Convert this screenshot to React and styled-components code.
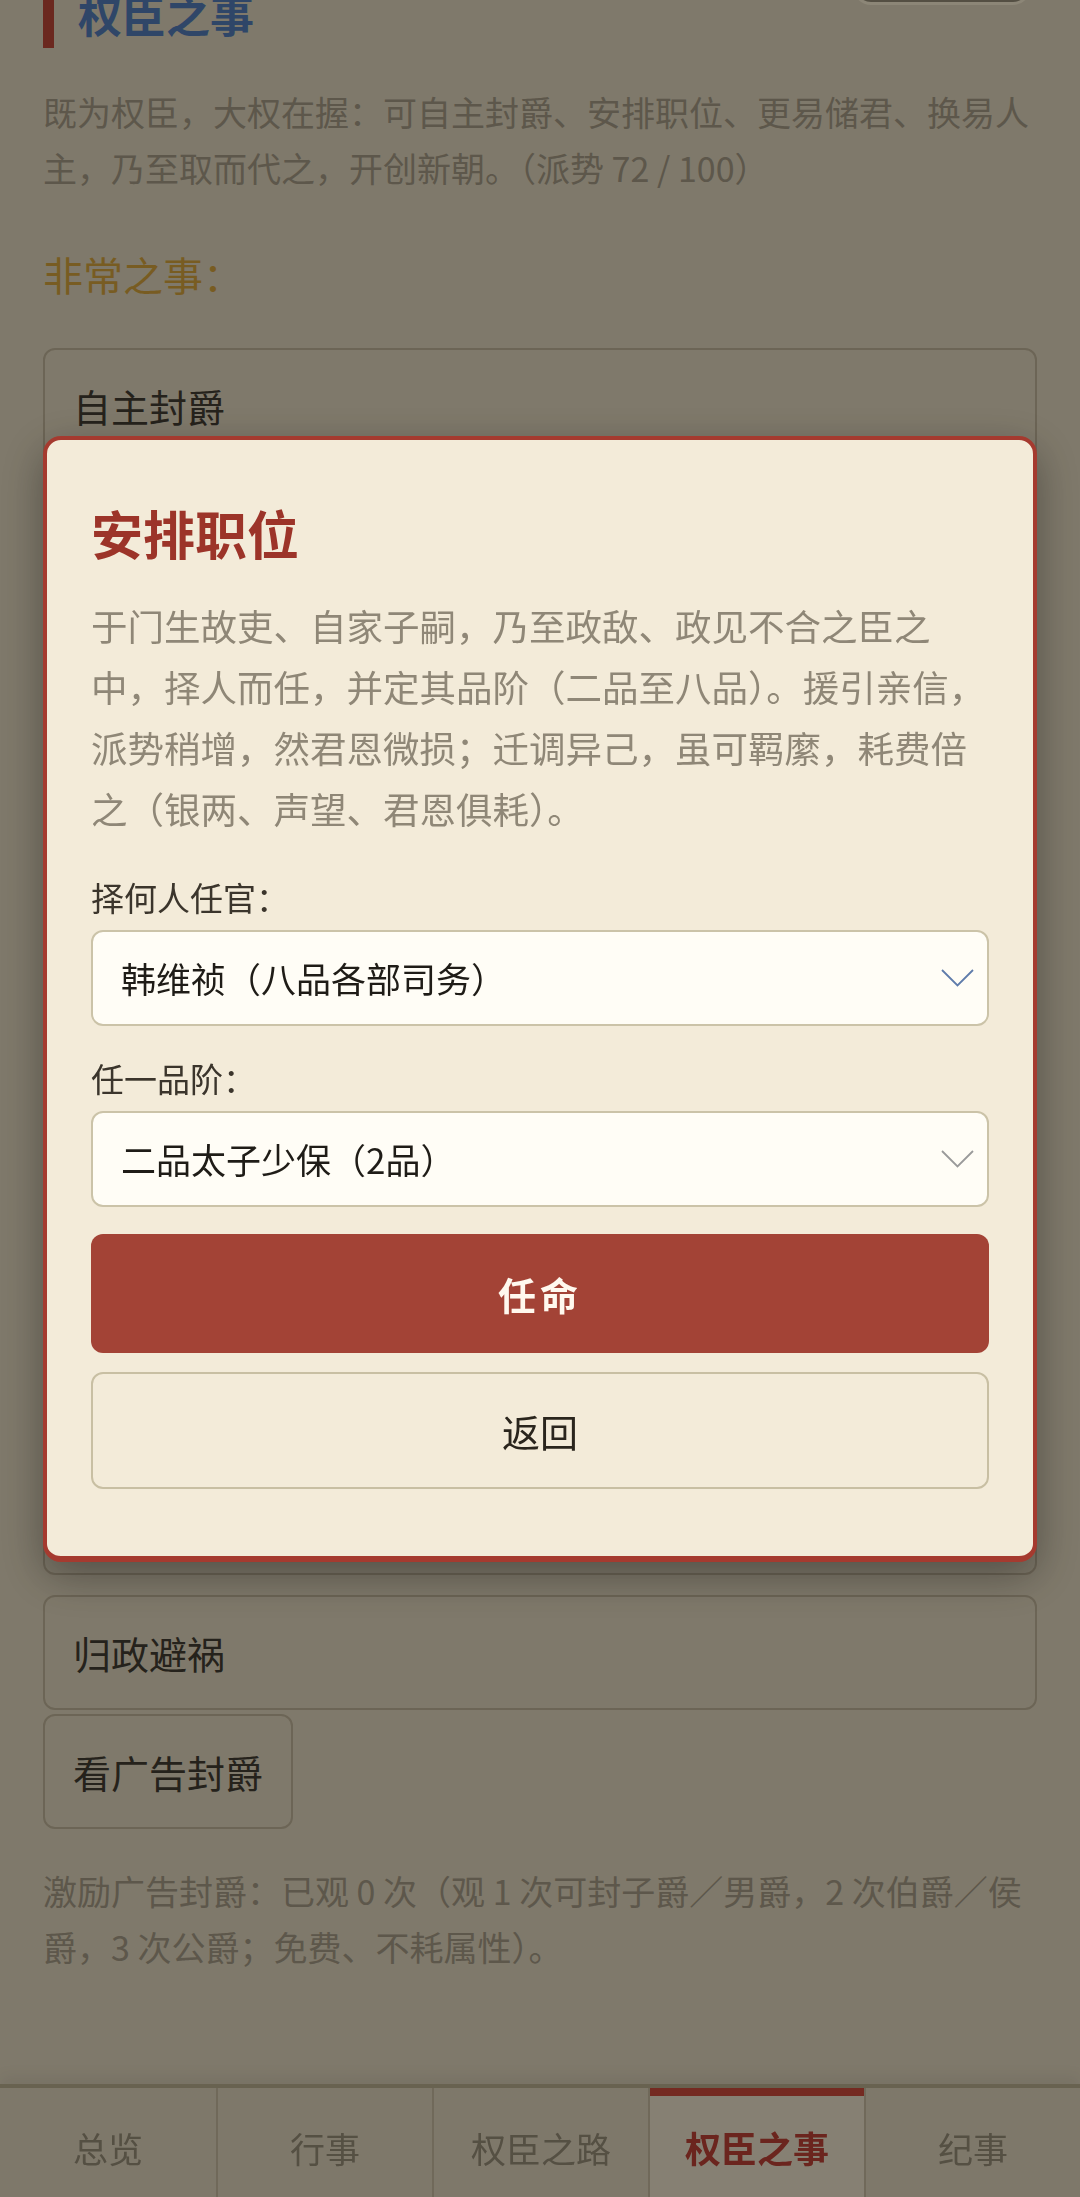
import React from "react";
import styled, { createGlobalStyle } from "styled-components";

const GlobalStyle = createGlobalStyle`
  * { box-sizing: border-box; }
  html, body { margin: 0; padding: 0; }
  body {
    background: #d4cab2;
    font-family: "Noto Sans CJK SC", "Noto Sans", sans-serif;
    color: #3f392f;
    overflow: hidden;
  }
  #root { display: flow-root; }
`;

const Page = styled.main`
  padding: 0 43px 240px;
`;

const HeaderRow = styled.header`
  display: flex;
  justify-content: space-between;
  align-items: flex-start;
  margin-top: -55px;
`;

const PageTitle = styled.h2`
  margin: 35px 0 0;
  padding: 3px 0 3px 24px;
  border-left: 11px solid #b24335;
  font-size: 44px;
  line-height: 62px;
  font-weight: 700;
  color: #4f76ad;
`;

const TopButton = styled.button`
  width: 178px;
  height: 60px;
  margin-right: 6px;
  border: 3px solid #e9dfc6;
  border-radius: 18px;
  background: #8c8470;
  font: inherit;
`;

const Intro = styled.p`
  margin: 36px 0 0;
  font-size: 34px;
  line-height: 56px;
  color: #9b917d;
`;

const SectionTitle = styled.h3`
  margin: 49px 0 0;
  font-size: 40px;
  line-height: 58px;
  font-weight: 400;
  color: #c99a3a;
`;

const ActionList = styled.div`
  display: flex;
  flex-direction: column;
  gap: 20px;
  margin-top: 45px;
`;

const ActionCard = styled.button`
  display: block;
  width: ${p => (p.$compact ? "auto" : "100%")};
  margin-top: ${p => (p.$compact ? "4px" : "0")};
  padding: 27px 28px;
  border: 2px solid #b4a88f;
  border-radius: 12px;
  background: transparent;
  text-align: left;
  font-family: inherit;
  font-size: 38px;
  line-height: 57px;
  color: #3f392f;
`;

const CardNote = styled.span`
  display: block;
  font-size: 24px;
  line-height: 32px;
  color: #9b917d;
`;

const Note = styled.p`
  margin: 34px 0 0;
  font-size: 34px;
  line-height: 56px;
  color: #9b917d;
`;

const TabBar = styled.nav`
  position: fixed;
  left: 0;
  right: 0;
  bottom: 0;
  display: grid;
  grid-template-columns: repeat(5, 1fr);
  background: #d2c8b1;
  border-top: 4px solid #ada385;
  box-shadow: 0 -8px 14px rgba(0, 0, 0, 0.06);
`;

const Tab = styled.div`
  padding: 35px 0 25px;
  text-align: center;
  font-size: ${p => (p.$active ? "36px" : "35px")};
  line-height: 49px;
  font-weight: ${p => (p.$active ? 700 : 400)};
  color: ${p => (p.$active ? "#b23f32" : "#8e8571")};
  background: ${p => (p.$active ? "#dfd5c0" : "transparent")};
  box-shadow: ${p => (p.$active ? "inset 0 8px 0 #c24737" : "none")};
  & + & {
    border-left: 2px solid #bbaf96;
  }
`;

const Overlay = styled.div`
  position: fixed;
  inset: 0;
  z-index: 10;
  display: flex;
  align-items: center;
  justify-content: center;
  padding: 0 43px 200px;
  background: rgba(0, 0, 0, 0.4);
`;

const Dialog = styled.section`
  width: 100%;
  padding: 60px 44px 67px;
  background: #f3ebd9;
  border: 4px solid #a53a2f;
  border-bottom-width: 6px;
  border-radius: 18px;
  box-shadow: 0 14px 44px rgba(0, 0, 0, 0.35);
`;

const DialogTitle = styled.h2`
  margin: 0;
  font-size: 52px;
  line-height: 66px;
  font-weight: 700;
  color: #9c3429;
`;

const DialogText = styled.p`
  margin: 29px 0 0;
  font-size: 36.5px;
  line-height: 61px;
  color: #8f8777;
`;

const Field = styled.div`
  margin-top: ${p => p.$gap}px;
`;

const FieldLabel = styled.label`
  display: block;
  margin-bottom: 8px;
  font-size: 33px;
  line-height: 50px;
  color: #3b352c;
`;

const SelectWrap = styled.div`
  position: relative;
`;

const Select = styled.select`
  display: block;
  width: 100%;
  height: 96px;
  padding: 0 70px 0 28px;
  border: 2px solid #cbc3a8;
  border-radius: 12px;
  background: #fffdf6;
  appearance: none;
  font-family: inherit;
  font-size: 35px;
  color: #1f1c17;
  outline: none;
`;

const Chevron = styled.svg`
  position: absolute;
  right: 15px;
  top: 39px;
  pointer-events: none;
  color: ${p => (p.$focused ? "#5f7cab" : "#9a9a9a")};
`;

const PrimaryButton = styled.button`
  display: block;
  width: 100%;
  height: 119px;
  margin-top: 27px;
  border: none;
  border-radius: 12px;
  background: #a34336;
  font-family: inherit;
  font-size: 38px;
  font-weight: 700;
  letter-spacing: 4px;
  color: #fff8ee;
`;

const SecondaryButton = styled.button`
  display: block;
  width: 100%;
  height: 117px;
  margin-top: 19px;
  border: 2px solid #c8bfa3;
  border-radius: 12px;
  background: transparent;
  font-family: inherit;
  font-size: 38px;
  color: #2a251d;
`;

const ChevronIcon = ({ focused }) => (
  <Chevron $focused={focused} width="33" height="18" viewBox="0 0 33 18">
    <polyline points="1,1 16.5,16.5 32,1" fill="none" stroke="currentColor" strokeWidth="1.8" />
  </Chevron>
);

const actions = ["自主封爵", "安排职位", "更易储君", "换易人主", "另立新君", "取而代之", "结党营私", "罢黜政敌"];
const tabs = ["总览", "行事", "权臣之路", "权臣之事", "纪事"];

const App = () => {
  return (
    <>
      <GlobalStyle />
      <Page>
        <HeaderRow>
          <PageTitle>权臣之事</PageTitle>
          <TopButton aria-label="更多" />
        </HeaderRow>
        <Intro>
          既为权臣，大权在握：可自主封爵、安排职位、更易储君、换易人主，乃至取而代之，开创新朝。（派势 72 / 100）
        </Intro>
        <SectionTitle>非常之事：</SectionTitle>
        <ActionList>
          {actions.map(name => (
            <ActionCard key={name}>{name}</ActionCard>
          ))}
          <ActionCard>
            开创新朝
            <CardNote>需派势九十以上，方可行之</CardNote>
          </ActionCard>
          <ActionCard>归政避祸</ActionCard>
        </ActionList>
        <ActionCard $compact>看广告封爵</ActionCard>
        <Note>
          激励广告封爵：已观 0 次（观 1 次可封子爵／男爵，2 次伯爵／侯爵，3 次公爵；免费、不耗属性）。
        </Note>
      </Page>

      <TabBar>
        {tabs.map(t => (
          <Tab key={t} $active={t === "权臣之事"}>
            {t}
          </Tab>
        ))}
      </TabBar>

      <Overlay>
        <Dialog>
          <DialogTitle>安排职位</DialogTitle>
          <DialogText>
            于门生故吏、自家子嗣，乃至政敌、政见不合之臣之中，择人而任，并定其品阶（二品至八品）。援引亲信，派势稍增，然君恩微损；迁调异己，虽可羁縻，耗费倍之（银两、声望、君恩俱耗）。
          </DialogText>
          <Field $gap={33}>
            <FieldLabel>择何人任官：</FieldLabel>
            <SelectWrap>
              <Select defaultValue="han">
                <option value="han">韩维祯（八品各部司务）</option>
                <option value="li">李承业（七品监察御史）</option>
              </Select>
              <ChevronIcon focused />
            </SelectWrap>
          </Field>
          <Field $gap={27}>
            <FieldLabel>任一品阶：</FieldLabel>
            <SelectWrap>
              <Select defaultValue="2">
                <option value="2">二品太子少保（2品）</option>
                <option value="3">三品侍郎（3品）</option>
              </Select>
              <ChevronIcon />
            </SelectWrap>
          </Field>
          <PrimaryButton>任命</PrimaryButton>
          <SecondaryButton>返回</SecondaryButton>
        </Dialog>
      </Overlay>
    </>
  );
};

export default App;
